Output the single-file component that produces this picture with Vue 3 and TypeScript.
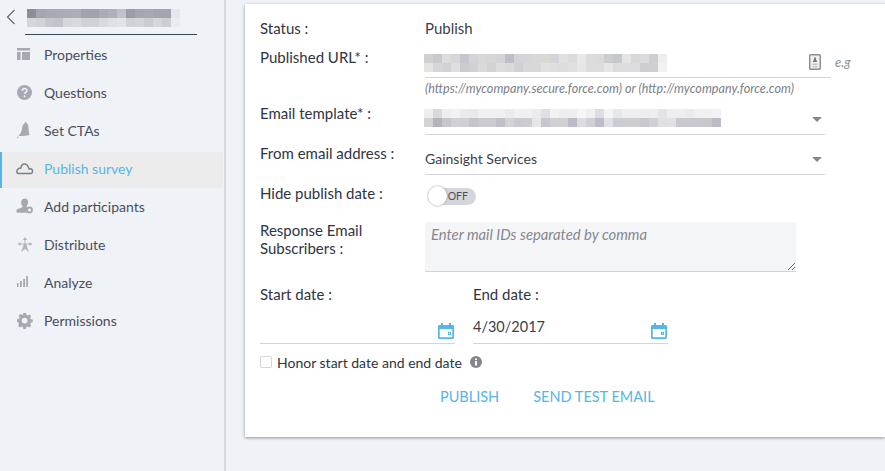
<script setup lang="ts">
interface NavItem { label: string; icon: string; active?: boolean }
const nav: NavItem[] = [
  { label: 'Properties', icon: 'table' },
  { label: 'Questions', icon: 'help' },
  { label: 'Set CTAs', icon: 'bell' },
  { label: 'Publish survey', icon: 'cloud', active: true },
  { label: 'Add participants', icon: 'person' },
  { label: 'Distribute', icon: 'star' },
  { label: 'Analyze', icon: 'bars' },
  { label: 'Permissions', icon: 'gear' },
]
const split = (s: string) => s.split(' ').map((c) => '#' + c)
const titleBlur = [
  split('8a8e98 a3a6b0 a7aab3 a8abb4 a9acb5 acafb8 a0a3ae a0a3ae a9acb6 aeb1bb c0c2c8 9a9da8 a4a7b1 a6a9b2 a2a5af a0a5af e4e7ec'),
  split('d4d6da cfd2d6 c6c8ce c0c6cc d5d7db d8dade cfd2d7 cfd2d7 d8dade dde0e4 e0e3e7 d0d2d8 d2d4da caccd2 d4d6dc ccced4 e8ebf0'),
]
const urlBlur = [
  split('d0d0d2 c8c9cc dcdcdc d8d6d8 c4c7cb d4d4d6 d8d8d8 d6d6d8 d4d4d6 bcc0c6 d2d4d8 d6d4d6 d8d8da d8d8d4 d2d4d8 e0e0de dcdcdc e8e8e8 dcdcde dadada cdcccf c6c9cc e4e4e4 d8d8da dcdce0 ced0d0 eeeef0'),
  split('e4e4e0 d4d5d8 d0d2d6 dfdfdf c9cbce d0d0d2 dadada d2d2d2 dcdcdc d8dade d0d0d4 d8d8d8 d8d8da e0e0e0 dedee0 dcdcdc e0e0e0 e6e6e6 dcdcde dcdcde e6e6e6 dcdcdc dcdce0 dcdce0 ccced0 cfcfd2 f2f2f2'),
]
const templateBlur = [
  split('eeeeee d9d9db eeeeee f2f2f2 ebebed e8e9ec f0f0f0 f0f0f2 f0f0f0 ebebed f0f0f0 f0f0f2 ebebed dfe0e3 f2f2f2 ededef eeeef0 f6f6f6 f0f0f2 dedde3 f4f4f6 e6e7ea eeeef0 eeeef0 ededef eeeef0 e6e3e8 eeeef0 eeeeee ebebed f0f0f4 f0f0f0 f2f2f4'),
  split('d2d2d4 b4b4bc c6c6cc d0d0d6 d0d0d4 c4c4cc cccad0 cacacf c0c0c9 d4d4d6 cacad0 cdcdd0 e6e6e8 c6c6ce d0d0d4 d0d0d4 bcbcc8 dcdce0 d0d0d6 bdbdc7 e0e0e6 cccdd4 cdcdd2 cdcdd2 c8c8ce cfcfd4 dfe0e5 e2e0e4 c8c8d0 c8c8d0 cac8ce c8c8cc bcbcc6'),
]
</script>

<template>
  <div class="app">
    <aside class="sidebar">
      <div class="title-row">
        <svg class="back" width="10" height="16" viewBox="0 0 10 16"><path d="M8.5 1 1.500 8l7 7" fill="none" stroke="#5d6470" stroke-width="1.100" /></svg>
        <div class="blur title-blur">
          <div v-for="(row, r) in titleBlur" :key="r" class="blur-row">
            <i v-for="(c, i) in row" :key="i" :style="{ background: c }"></i>
          </div>
        </div>
      </div>
      <nav class="nav">
        <a v-for="item in nav" :key="item.label" class="nav-item" :class="{ active: item.active }">
          <svg class="nav-icon" width="18" height="18" viewBox="0 0 18 18">
            <template v-if="item.icon === 'table'">
              <path d="M1 2h13v2.500H1zM1 6h3.500v8H1zM6 6h8v8H6z" fill="#a6a9b1" />
            </template>
            <template v-else-if="item.icon === 'help'">
              <circle cx="8.500" cy="8.500" r="7.500" fill="#a6a9b1" />
              <path d="M6.300 6.800c0-3 4.600-3 4.600-.2 0 1.800-2.300 1.700-2.300 3.500" fill="none" stroke="#eff2f6" stroke-width="1.500" />
              <circle cx="8.600" cy="12.300" r="1" fill="#eff2f6" />
            </template>
            <template v-else-if="item.icon === 'bell'">
              <path d="M9.500 0c.7 0 1 .5 1 1.200 1.500.8 2 2.500 2 4.500 0 2.500.3 5 1 7.300-3.500 1-7.500 1.300-11 1 1.800-2 3-4 3.500-7C6 5 6.500 2.800 8.500 1.600 8.600.6 8.900 0 9.500 0Z" fill="#a6a9b1" />
              <circle cx="1.800" cy="15.200" r=".7" fill="#a6a9b1" />
            </template>
            <template v-else-if="item.icon === 'cloud'">
              <path transform="translate(0 .5)" d="M2.500 13h12.300c2.300 0 2.300-4.500-.3-4.700-.5-.1-1 0-1.400.2C12.500 6.400 11.500 3.500 8.500 3.500 6.300 3.500 5.200 5.500 4.800 7.500 2.800 7.500.8 9 .8 10.800c0 1.200.7 2.200 1.700 2.200Z" fill="none" stroke="#797d88" stroke-width="1.400" />
            </template>
            <template v-else-if="item.icon === 'person'">
              <path transform="scale(1.100)" d="M8 0.500c2 0 3.200 1.600 3 3.600-.1 1.700-1 2.700-1.400 3.300 0 .8.400 1.300 1 1.600-1 1.300-1 3.100-.2 4.300H1c-.8-.4-.8-1.700-.2-2.700C2 9 5.500 9.500 6 7.400 5.200 6.500 4.700 5.500 4.700 4 4.700 2 6 .5 8 .5Z" fill="#a6a9b1" />
              <circle cx="13.500" cy="12" r="2.500" fill="none" stroke="#a6a9b1" stroke-width="1.800" />
            </template>
            <template v-else-if="item.icon === 'star'">
              <path d="M9 1 6.800 4h1.700v3.500H4.500V6L1.500 8l3 2V8.500h3.300L5 16l4-3 4 3-2.800-7.500h3.300V10l3-2-3-2v1.500h-4V4h1.700L9 1Z" fill="#b2b5bc" />
            </template>
            <template v-else-if="item.icon === 'bars'">
              <path d="M1 9h1.500v4H1zM4 7h1.800v6H4zM7.200 5H9v8H7.200zM10.200 2h1.700v11h-1.700z" fill="#a6a9b1" />
            </template>
            <template v-else>
              <path d="M7 .5h3l.4 2.200 1.500.6 1.900-1.200 2 2.100-1.200 1.800.6 1.500 2.300.4v3l-2.300.4-.6 1.500 1.200 1.900-2.100 2-1.800-1.200-1.500.6-.4 2.300H7l-.4-2.300-1.500-.6-1.900 1.200-2-2.100 1.200-1.800-.6-1.500L0 10.400v-3l2.300-.4.6-1.500L1.700 3.600l2.100-2 1.800 1.200 1-.6L7 .5Zm1.500 5.300a3.200 3.200 0 1 0 0 6.400 3.200 3.200 0 0 0 0-6.400Z" fill="#a6a9b1" transform="translate(1 .5) scale(.9)" />
            </template>
          </svg>
          <span>{{ item.label }}</span>
        </a>
      </nav>
    </aside>

    <main class="main">
      <section class="card">
        <div class="row status-row">
          <label class="label">Status :</label>
          <span class="value big">Publish</span>
        </div>

        <div class="row url-row">
          <label class="label">Published URL* :</label>
          <div class="field url-field">
            <div class="blur url-blur">
              <div v-for="(row, r) in urlBlur" :key="r" class="blur-row">
                <i v-for="(c, i) in row" :key="i" :style="{ background: c }"></i>
              </div>
            </div>
            <svg class="doc" width="12" height="16" viewBox="0 0 12 16">
              <rect x=".7" y=".7" width="10.600" height="14.600" rx="1" fill="#efefef" stroke="#8b8d91" stroke-width="1.400" />
              <path d="M5 3.500h2v3H5zM4 6.500h4V8H4z" fill="#77797d" />
              <path d="M3.500 9.500h5V11h-5zM3.500 12h5v1.300h-5z" fill="#c4c4c4" />
            </svg>
          </div>
          <em class="eg">e.g</em>
        </div>
        <p class="hint">(https://mycompany.secure.force.com) or (http://mycompany.force.com)</p>

        <div class="row template-row">
          <label class="label">Email template* :</label>
          <div class="field select">
            <div class="blur template-blur">
              <div v-for="(row, r) in templateBlur" :key="r" class="blur-row">
                <i v-for="(c, i) in row" :key="i" :style="{ background: c }"></i>
              </div>
            </div>
            <span class="caret"></span>
          </div>
        </div>

        <div class="row from-row">
          <label class="label">From email address :</label>
          <div class="field select">
            <span class="value">Gainsight Services</span>
            <span class="caret"></span>
          </div>
        </div>

        <div class="row hide-row">
          <label class="label">Hide publish date :</label>
          <div class="toggle"><span class="knob"></span><span class="off">OFF</span></div>
        </div>

        <div class="row response-row">
          <label class="label">Response Email<br />Subscribers :</label>
          <textarea class="textarea" placeholder="Enter mail IDs separated by comma"></textarea>
        </div>

        <div class="dates">
          <div class="date">
            <label class="label">Start date :</label>
            <div class="date-field">
              <span class="value date-value"></span>
              <svg class="cal" width="16" height="16" viewBox="0 0 16 16"><path d="M3 0h2v2h6V0h2v2h1.500c.8 0 1.500.7 1.500 1.500v11c0 .8-.7 1.500-1.500 1.500h-13C.7 16 0 15.300 0 14.500v-11C0 2.700.7 2 1.500 2H3V0Zm-1.300 6v8.300h12.600V6H1.700Zm8.300 3h3v3h-3V9Zm1 1v1h1v-1h-1Z" fill="#56b5e8" fill-rule="evenodd" /></svg>
            </div>
          </div>
          <div class="date">
            <label class="label">End date :</label>
            <div class="date-field">
              <span class="value date-value">4/30/2017</span>
              <svg class="cal" width="16" height="16" viewBox="0 0 16 16"><path d="M3 0h2v2h6V0h2v2h1.500c.8 0 1.500.7 1.500 1.500v11c0 .8-.7 1.500-1.500 1.500h-13C.7 16 0 15.300 0 14.500v-11C0 2.700.7 2 1.500 2H3V0Zm-1.300 6v8.300h12.600V6H1.700Zm8.300 3h3v3h-3V9Zm1 1v1h1v-1h-1Z" fill="#56b5e8" fill-rule="evenodd" /></svg>
            </div>
          </div>
        </div>

        <div class="honor">
          <span class="check"></span>
          <span class="honor-text">Honor start date and end date</span>
          <svg width="12" height="12" viewBox="0 0 12 12"><circle cx="6" cy="6" r="6" fill="#85878c" /><path d="M5 5h2v4.500H5zM5 2.500h2v1.600H5z" fill="#fff" /></svg>
        </div>

        <div class="actions">
          <button class="btn" type="button">PUBLISH</button>
          <button class="btn" type="button">SEND TEST EMAIL</button>
        </div>
      </section>
    </main>
  </div>
</template>

<style>
html, body { margin: 0; padding: 0; overflow: hidden; }
</style>

<style scoped>
.app {
  display: flex;
  width: 885px;
  height: 471px;
  overflow: hidden;
  background: #eff2f6;
  font-family: Lato, "Open Sans", sans-serif;
  font-size: 14px;
  color: #30343f;
}
.sidebar {
  box-sizing: border-box;
  flex: 0 0 226px;
  height: 100%;
  border-right: 2px solid #d6d9dd;
  padding-right: 1px;
}
.title-row {
  box-sizing: border-box;
  position: relative;
  height: 35px;
  margin-left: 25px;
  width: 172px;
  border-bottom: 1px solid #3b4459;
}
.back { position: absolute; left: -19px; top: 9px; }
.blur { display: flex; flex-direction: column; }
.blur-row { display: flex; height: 9px; }
.blur-row i { display: block; flex: 0 0 9px; height: 9px; }
.title-blur { position: absolute; left: 2px; top: 9px; }
.nav { display: flex; flex-direction: column; gap: 2px; margin-top: 3px; }
.nav-item {
  display: flex;
  align-items: center;
  box-sizing: border-box;
  height: 36px;
  padding: 0 0 4px 14px;
  color: #4a4f5c;
  border-left: 2px solid transparent;
}
.nav-icon { flex: 0 0 18px; margin: 2px 10px 0 0; }
.nav-item.active {
  background: #ececec;
  border-left-color: #56b5e8;
  color: #56b5e8;
}
.main { flex: 1; padding: 4px 0 0 19px; min-width: 0; }
.card {
  box-sizing: border-box;
  height: 433px;
  background: #fff;
  box-shadow: 0 1px 3px rgba(0, 0, 0, .4);
  padding: 14px 0 0 15px;
}
.row { display: flex; align-items: flex-start; }
.label { flex: 0 0 165px; display: block; font-size: 15px; line-height: 18px; color: #30343f; }
.value { line-height: 22px; color: #3c404a; }
.value.big { font-size: 15px; }
.status-row { height: 22px; }
.status-row .label { margin-top: 1px; }
.status-row .value { margin-top: -1px; }
.url-row { margin-top: 6px; }
.url-row .label { margin-top: 2px; }
.field {
  box-sizing: border-box;
  position: relative;
  display: flex;
  align-items: center;
  justify-content: space-between;
  border-bottom: 1px solid #d3d4d6;
}
.url-field { width: 406px; height: 32px; }
.url-blur { margin-left: -1px; margin-top: 3px; }
.doc { margin-right: 10px; }
.eg { margin-left: 4px; margin-top: 8px; font-size: 13px; color: #8c8f96; }
.hint {
  margin: 4px 0 0 165px;
  height: 14px;
  line-height: 14px;
  font-size: 12.6px;
  font-style: italic;
  color: #7c7f87;
}
.template-row { margin-top: 4px; height: 36px; }
.template-row .label { margin-top: 4px; }
.select { width: 400px; height: 35px; }
.template-blur { margin-left: -1px; margin-top: 2px; }
.caret {
  position: absolute;
  right: 3px;
  top: 17px;
  border-left: 5px solid transparent;
  border-right: 5px solid transparent;
  border-top: 5px solid #85878c;
}
.from-row { margin-top: 4px; height: 36px; }
.from-row .label { margin-top: 4px; }
.from-row .value { margin-top: 4px; }
.hide-row { margin-top: 8px; height: 22px; }
.hide-row .label { margin-top: 0; }
.toggle {
  position: relative;
  box-sizing: border-box;
  width: 48px;
  height: 17px;
  margin: 4px 0 0 3px;
  border-radius: 9px;
  background: #d4d6da;
  display: flex;
  align-items: center;
  justify-content: flex-end;
  padding-right: 8px;
}
.knob {
  position: absolute;
  left: 0;
  top: -2px;
  width: 19px;
  height: 20px;
  border-radius: 50%;
  background: #fff;
  box-shadow: 0 0 2px rgba(0, 0, 0, .45);
}
.off { font-size: 10.5px; line-height: 1; color: #4d515b; }
.response-row { margin-top: 16px; height: 50px; }
.response-row .label { margin-top: -1px; }
.textarea {
  box-sizing: border-box;
  width: 371px;
  height: 50px;
  padding: 3px 6px;
  border: 0;
  border-bottom: 1px solid #d3d4d6;
  background: #f4f5f7;
  outline: 0;
  font: italic 14.8px Lato, sans-serif;
  line-height: 18px;
}
.textarea::placeholder { color: #85888f; opacity: 1; }
.dates { display: flex; gap: 18px; margin-top: 14px; }
.date { width: 195px; }
.date .label { height: 18px; margin: -1px 0 1px; }
.date-field {
  box-sizing: border-box;
  display: flex;
  align-items: center;
  justify-content: space-between;
  height: 40px;
  padding-top: 8px;
  border-bottom: 1px solid #d3d4d6;
}
.date-value { font-size: 14.5px; margin-top: -2px; }
.cal { margin-left: auto; margin-right: 1px; margin-top: 6px; }
.honor { display: flex; align-items: center; margin-top: 9px; height: 18px; }
.check {
  box-sizing: border-box;
  width: 12px;
  height: 12px;
  border: 1px solid #d6d6d6;
  border-radius: 2px;
  margin-right: 5px;
}
.honor-text { margin-right: 8px; }
.actions { display: flex; gap: 34px; margin: 17px 0 0 180px; }
.btn {
  border: 0;
  background: none;
  padding: 0;
  font: 14.5px Lato, sans-serif;
  line-height: 18px;
  color: #56b5e8;
}
</style>
